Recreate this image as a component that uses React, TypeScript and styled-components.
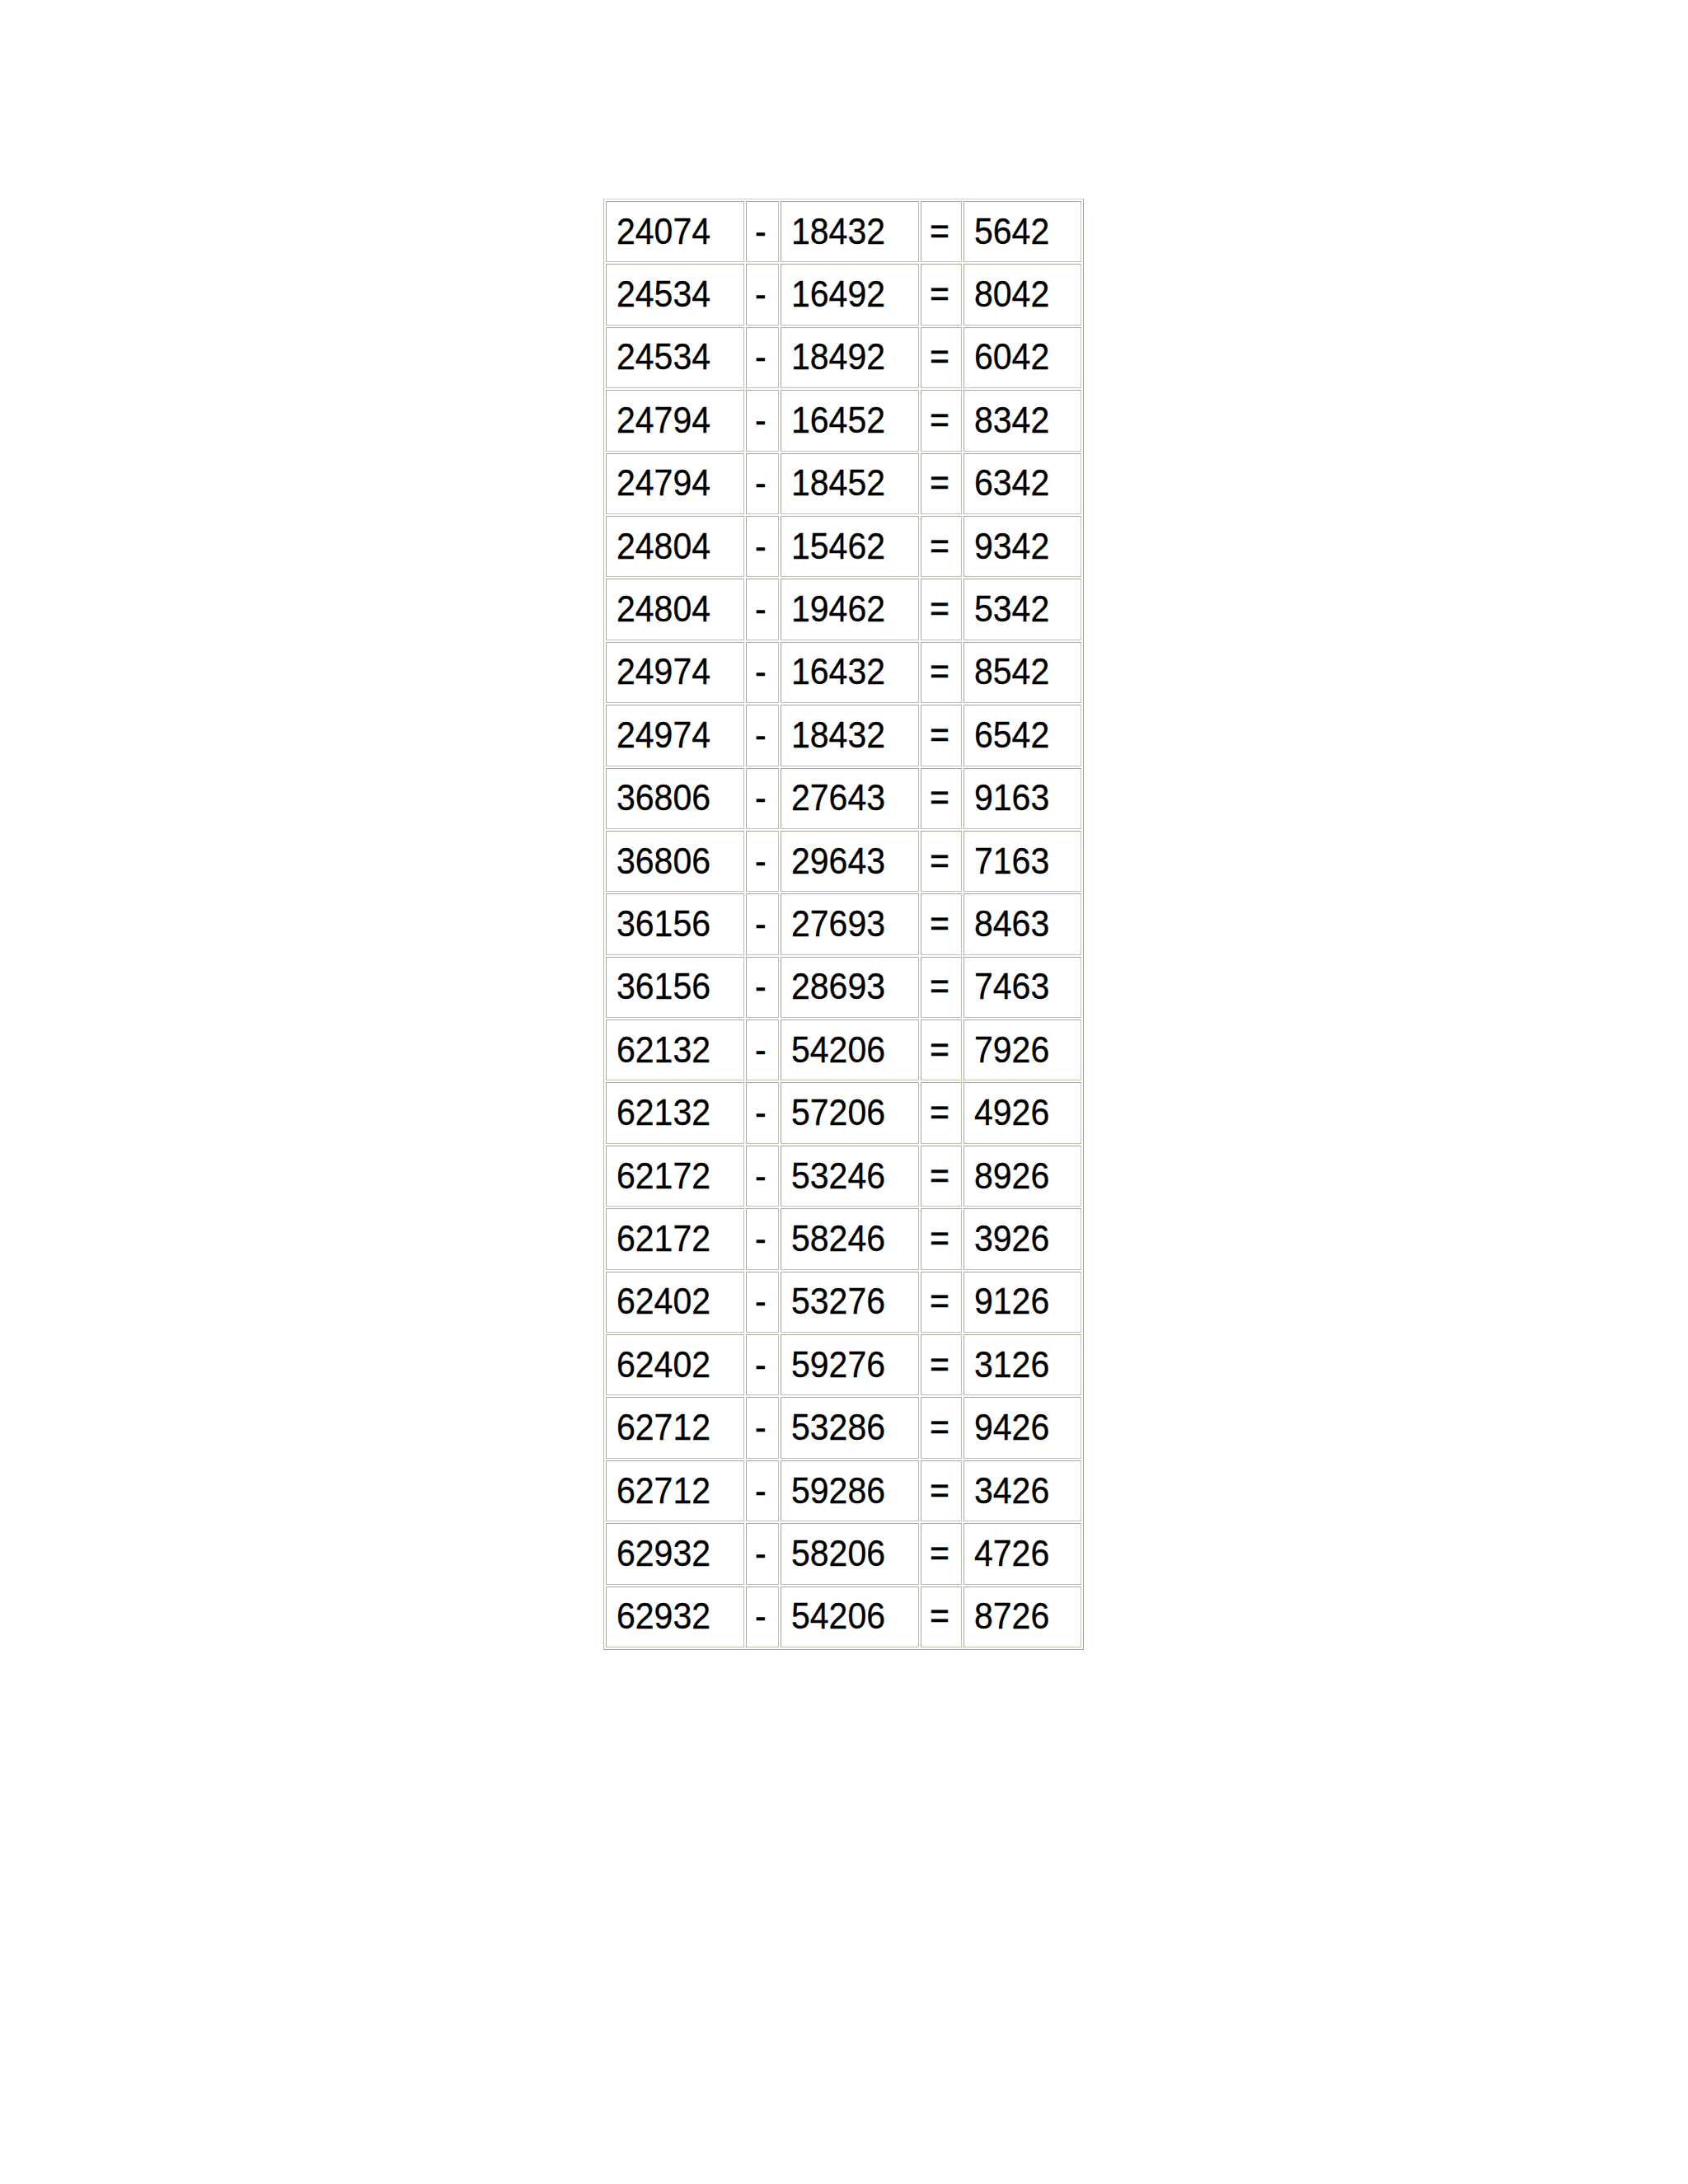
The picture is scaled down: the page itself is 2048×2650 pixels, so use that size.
import styled, { createGlobalStyle } from "styled-components";

const GlobalStyle = createGlobalStyle`
  html, body {
    margin: 0;
    padding: 0;
    background: #ffffff;
  }
  body {
    font-family: "Liberation Sans", Arial, sans-serif;
  }
`;

const Page = styled.div`
  width: 2048px;
  height: 2650px;
  padding: 241px 0 0 732px;
  box-sizing: border-box;
  background: #ffffff;
`;

const Table = styled.table`
  border-collapse: separate;
  border-spacing: 2px;
  border-style: solid;
  border-width: 1.5px;
  border-color: #d6d6c8 #a0a090 #a0a090 #b8b8a8;
  width: 583px;
  table-layout: fixed;
`;

const Cell = styled.td<{ $w: number; $pad?: number }>`
  width: ${(p) => p.$w}px;
  height: 74.4px;
  box-sizing: border-box;
  padding: 0 0 0 ${(p) => p.$pad ?? 12}px;
  border: 1.5px solid;
  border-color: #a8a898 #c2c2b2 #c2c2b2 #a8a898;
  font-family: "Liberation Sans", Arial, sans-serif;
  font-size: 41px;
  color: #000000;
  vertical-align: middle;
  white-space: nowrap;
  overflow: hidden;
`;

const Num = styled.span`
  display: inline-block;
  transform: scaleY(1.1);
  -webkit-text-stroke: 0.3px #000;
`;

const rows: [string, string, string][] = [
  ["24074", "18432", "5642"],
  ["24534", "16492", "8042"],
  ["24534", "18492", "6042"],
  ["24794", "16452", "8342"],
  ["24794", "18452", "6342"],
  ["24804", "15462", "9342"],
  ["24804", "19462", "5342"],
  ["24974", "16432", "8542"],
  ["24974", "18432", "6542"],
  ["36806", "27643", "9163"],
  ["36806", "29643", "7163"],
  ["36156", "27693", "8463"],
  ["36156", "28693", "7463"],
  ["62132", "54206", "7926"],
  ["62132", "57206", "4926"],
  ["62172", "53246", "8926"],
  ["62172", "58246", "3926"],
  ["62402", "53276", "9126"],
  ["62402", "59276", "3126"],
  ["62712", "53286", "9426"],
  ["62712", "59286", "3426"],
  ["62932", "58206", "4726"],
  ["62932", "54206", "8726"],
];

const App = () => {
  return (
    <Page>
      <GlobalStyle />
      <Table>
        <tbody>
          {rows.map(([a, b, c], i) => (
            <tr key={i}>
              <Cell $w={168}>
                <Num>{a}</Num>
              </Cell>
              <Cell $w={40} $pad={10}>
                <Num>-</Num>
              </Cell>
              <Cell $w={168}>
                <Num>{b}</Num>
              </Cell>
              <Cell $w={50} $pad={10}>
                <Num>=</Num>
              </Cell>
              <Cell $w={143}>
                <Num>{c}</Num>
              </Cell>
            </tr>
          ))}
        </tbody>
      </Table>
    </Page>
  );
};

export default App;
